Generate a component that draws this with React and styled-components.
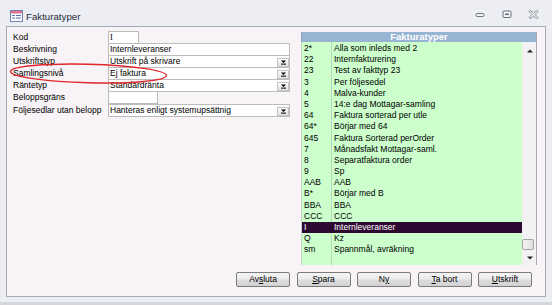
import React from 'react';
import styled, { createGlobalStyle } from 'styled-components';

const GlobalStyle = createGlobalStyle`
  html, body { margin: 0; padding: 0; background: #eceef3; }
  body { font-family: "Liberation Sans", Arial, sans-serif; color: #000; }
`;

const Window = styled.div`
  width: 552px;
  height: 305px;
  display: flex;
  flex-direction: column;
  background: #eceef3;
  overflow: hidden;
`;

const TitleBar = styled.div`
  height: 26px;
  flex-shrink: 0;
  display: flex;
  align-items: center;
  box-sizing: border-box;
  padding: 6px 0 0 10px;
`;

const Title = styled.span`
  font-size: 9.7px;
  color: #1e2a3a;
  margin-left: 3px;
`;

const Controls = styled.div`
  margin-left: auto;
  margin-top: -3px;
  display: flex;
  padding-right: 5px;
`;

const Ctrl = styled.div`
  width: 27px;
  height: 10px;
  display: flex;
  align-items: center;
  justify-content: center;
`;

const Client = styled.div`
  flex: 1;
  margin: 0 6px;
  border: 1px solid #a7abb4;
  background: #f7f3f6;
  display: flex;
  flex-direction: column;
  padding: 4px 8px 9px 6px;
  min-height: 0;
`;

const Body = styled.div`
  flex: 1;
  display: flex;
  min-height: 0;
`;

const Form = styled.div`
  position: relative;
  width: 277px;
  display: flex;
  flex-direction: column;
`;

const Row = styled.div`
  display: flex;
  height: 12px;
  margin-top: ${p => p.$gap || 0}px;
`;

const Label = styled.div`
  width: 95px;
  font-size: 8.5px;
  line-height: 12px;
  white-space: nowrap;
`;

const Field = styled.div`
  position: relative;
  width: ${p => p.$w}px;
  height: 13px;
  box-sizing: border-box;
  border: 1px solid #bcbcbc;
  background: #fff;
  font-size: 8.5px;
  line-height: 11px;
  padding-left: 1px;
  font-family: ${p => (p.$serif ? '"Liberation Serif", "Times New Roman", serif' : 'inherit')};
  white-space: nowrap;
`;

const DropBtn = styled.div`
  position: absolute;
  right: 0;
  bottom: 0;
  width: 12px;
  height: 9px;
  box-sizing: border-box;
  border: 1px solid #c4c4c4;
  background: linear-gradient(#fbfbfb, #e3e3e3);
  display: flex;
  align-items: center;
  justify-content: center;
`;

const Ellipse = styled.svg`
  position: absolute;
  left: -5px;
  top: 30px;
  pointer-events: none;
`;

const ListPanel = styled.div`
  margin: 1px 0 0 11px;
  width: 236px;
  display: flex;
  flex-direction: column;
  border-right: 1px solid #a9a9b0;
  box-sizing: border-box;
`;

const ListHeader = styled.div`
  height: 10px;
  background: #98b4d3;
  border-left: 1px solid #8aa4c2;
  color: #fff;
  font-weight: bold;
  font-size: 9.5px;
  line-height: 10px;
  text-align: center;
`;

const ListBody = styled.div`
  flex: 1;
  display: flex;
  min-height: 0;
`;

const Rows = styled.div`
  flex: 1;
  background-color: #ccffcc;
  background-image: linear-gradient(#b9d8bb, #b9d8bb);
  background-size: 1px 100%;
  background-position: 29px 0;
  background-repeat: no-repeat;
  border-left: 1px solid #c7d6c7;
  padding-top: 1px;
`;

const ItemRow = styled.div`
  display: grid;
  grid-template-columns: 30px 1fr;
  height: 11.2px;
  line-height: 11.2px;
  font-size: 8.5px;
  white-space: nowrap;
  background: ${p => (p.$sel ? '#2e0a32' : 'transparent')};
  color: ${p => (p.$sel ? '#fff' : '#000')};
`;

const Code = styled.span`
  padding-left: 2px;
`;

const Desc = styled.span`
  padding-left: 2px;
`;

const Scrollbar = styled.div`
  width: 14px;
  display: flex;
  flex-direction: column;
  background: #f3f1f3;
`;

const ScrollBtn = styled.div`
  height: ${p => p.$h}px;
  display: flex;
  align-items: center;
  justify-content: center;
  padding-left: 2px;
`;

const Track = styled.div`
  flex: 1;
`;

const Thumb = styled.div`
  width: 12px;
  height: 11px;
  box-sizing: border-box;
  border: 1px solid #a4a4a4;
  border-radius: 2px;
  background: linear-gradient(90deg, #f6f6f6, #dedede);
`;

const Footer = styled.div`
  height: 15px;
  margin-top: 7px;
  display: flex;
  justify-content: flex-end;
  gap: 6.5px;
  padding-right: 5px;
`;

const Button = styled.button`
  width: 54px;
  height: 15px;
  padding: 0;
  box-sizing: border-box;
  border: 1px solid #7b7b7b;
  border-radius: 2px;
  background: linear-gradient(#f4f4f4 0%, #ebebeb 45%, #dcdcdc 55%, #d2d2d2 100%);
  font-family: "Liberation Sans", Arial, sans-serif;
  font-size: 8.5px;
  line-height: 13px;
  color: #000;
`;

const BottomStrip = styled.div`
  height: 8px;
  flex-shrink: 0;
  border-bottom: 3px solid #d4d6db;
  box-sizing: border-box;
`;

const Arrow = () => (
  <svg width="7" height="5" viewBox="0 0 7 5">
    <path d="M1 0.5h5L3.5 3z" fill="#000" />
    <rect x="1" y="3.6" width="5" height="1" fill="#000" />
  </svg>
);

const FormIcon = () => (
  <svg width="13" height="12" viewBox="0 0 13 12">
    <rect x="0.5" y="0.5" width="12" height="11" fill="#fdfdff" stroke="#6d86b8" />
    <rect x="1" y="1" width="11" height="2.5" fill="#e4708a" />
    <rect x="2" y="5" width="3" height="1" fill="#4e6fb0" />
    <rect x="6" y="5" width="5" height="1" fill="#4e6fb0" />
    <rect x="2" y="7.5" width="3" height="1" fill="#4e6fb0" />
    <rect x="6" y="7.5" width="5" height="1" fill="#4e6fb0" />
  </svg>
);

const items = [
  ['2*', 'Alla som inleds med 2'],
  ['22', 'Internfakturering'],
  ['23', 'Test av fakttyp 23'],
  ['3', 'Per följesedel'],
  ['4', 'Malva-kunder'],
  ['5', '14:e dag Mottagar-samling'],
  ['64', 'Faktura sorterad per utle'],
  ['64*', 'Börjar med 64'],
  ['645', 'Faktura Sorterad perOrder'],
  ['7', 'Månadsfakt Mottagar-saml.'],
  ['8', 'Separatfaktura order'],
  ['9', 'Sp'],
  ['AAB', 'AAB'],
  ['B*', 'Börjar med B'],
  ['BBA', 'BBA'],
  ['CCC', 'CCC'],
  ['I', 'Internleveranser'],
  ['Q', 'Kz'],
  ['sm', 'Spannmål, avräkning'],
];

export default function App() {
  return (
    <>
      <GlobalStyle />
      <Window>
        <TitleBar>
          <FormIcon />
          <Title>Fakturatyper</Title>
          <Controls>
            <Ctrl>
              <svg width="10" height="6" viewBox="0 0 10 6">
                <rect x="1" y="1.5" width="8" height="3" rx="1.2" fill="#f4f5f8" stroke="#6b6f78" />
              </svg>
            </Ctrl>
            <Ctrl>
              <svg width="10" height="9" viewBox="0 0 10 9">
                <rect x="1" y="1" width="8" height="6.5" rx="1" fill="#f4f5f8" stroke="#6b6f78" />
                <rect x="3" y="3.5" width="4" height="1.6" fill="#6b6f78" />
              </svg>
            </Ctrl>
            <Ctrl>
              <svg width="11" height="9" viewBox="0 0 11 9">
                <path
                  d="M1 1.5L2.5 0.5L5.5 3L8.5 0.5L10 1.5L7 4.5L10 7.5L8.5 8.5L5.5 6L2.5 8.5L1 7.5L4 4.5Z"
                  fill="#f4f5f8"
                  stroke="#6b6f78"
                  strokeWidth="0.8"
                />
              </svg>
            </Ctrl>
          </Controls>
        </TitleBar>

        <Client>
          <Body>
            <Form>
              <Row>
                <Label>Kod</Label>
                <Field $w={31} $serif>I</Field>
              </Row>
              <Row>
                <Label>Beskrivning</Label>
                <Field $w={182}>Internleveranser</Field>
              </Row>
              <Row>
                <Label>Utskriftstyp</Label>
                <Field $w={182}>
                  Utskrift på skrivare
                  <DropBtn><Arrow /></DropBtn>
                </Field>
              </Row>
              <Row>
                <Label>Samlingsnivå</Label>
                <Field $w={182}>
                  Ej faktura
                  <DropBtn><Arrow /></DropBtn>
                </Field>
              </Row>
              <Row>
                <Label>Räntetyp</Label>
                <Field $w={182}>
                  Standardränta
                  <DropBtn><Arrow /></DropBtn>
                </Field>
              </Row>
              <Row>
                <Label>Beloppsgräns</Label>
                <Field $w={50} />
              </Row>
              <Row $gap={1}>
                <Label>Följesedlar utan belopp</Label>
                <Field $w={182}>
                  Hanteras enligt systemupsättnig
                  <DropBtn><Arrow /></DropBtn>
                </Field>
              </Row>
              <Ellipse width="172" height="26" viewBox="0 0 172 26">
                <ellipse
                  cx="80.5"
                  cy="12.5"
                  rx="78"
                  ry="9.3"
                  fill="none"
                  stroke="#e3262b"
                  strokeWidth="1.4"
                  transform="rotate(1.5 80.5 12.5)"
                />
              </Ellipse>
            </Form>

            <ListPanel>
              <ListHeader>Fakturatyper</ListHeader>
              <ListBody>
                <Rows>
                  {items.map(([code, desc]) => (
                    <ItemRow key={code} $sel={code === 'I'}>
                      <Code>{code}</Code>
                      <Desc>{desc}</Desc>
                    </ItemRow>
                  ))}
                </Rows>
                <Scrollbar>
                  <ScrollBtn $h={18}>
                    <svg width="6" height="4" viewBox="0 0 6 4"><path d="M0 3.5L3 0.5L6 3.5z" fill="#222" /></svg>
                  </ScrollBtn>
                  <Track />
                  <Thumb />
                  <ScrollBtn $h={15}>
                    <svg width="6" height="4" viewBox="0 0 6 4"><path d="M0 0.5L3 3.5L6 0.5z" fill="#222" /></svg>
                  </ScrollBtn>
                </Scrollbar>
              </ListBody>
            </ListPanel>
          </Body>

          <Footer>
            <Button>Av<u>s</u>luta</Button>
            <Button><u>S</u>para</Button>
            <Button>N<u>y</u></Button>
            <Button><u>T</u>a bort</Button>
            <Button><u>U</u>tskrift</Button>
          </Footer>
        </Client>
        <BottomStrip />
      </Window>
    </>
  );
}
